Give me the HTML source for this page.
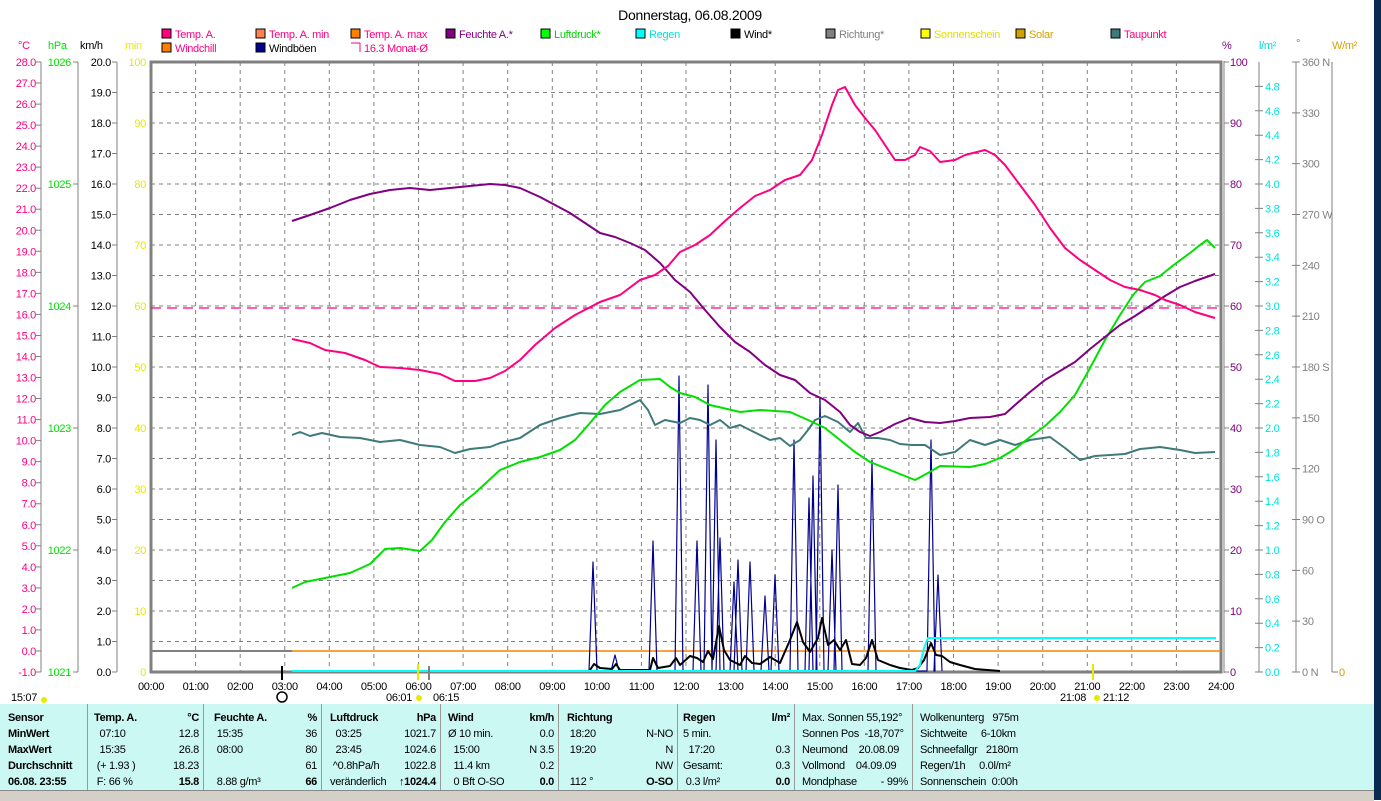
<!DOCTYPE html>
<html><head><meta charset="utf-8">
<style>
html,body{margin:0;padding:0;background:#fff;}
body{width:1381px;height:800px;overflow:hidden;position:relative;font-family:"Liberation Sans",sans-serif;}
svg{position:absolute;left:0;top:0;}
text{font-family:"Liberation Sans",sans-serif;font-size:11px;letter-spacing:-0.3px;}
.tb{position:absolute;left:0;top:704px;width:1374px;height:86px;background:#ccf8f4;}
.col{position:absolute;top:0;height:86px;border-right:1px solid #999;font-size:11px;line-height:16px;padding-top:6px;box-sizing:border-box;letter-spacing:-0.3px;}
.col div{white-space:nowrap;height:16px;position:relative;}
.r{position:absolute;right:4px;}
b{font-weight:bold;}
.foot{position:absolute;left:0;top:790px;width:1374px;height:10px;background:#d4d0c8;border-top:1px solid #888;}
.blue{position:absolute;left:1374px;top:0;width:7px;height:800px;background:#0a2a50;}
</style></head><body>
<svg id="s" width="1381" height="704" xmlns="http://www.w3.org/2000/svg">
<text x="690" y="20" text-anchor="middle" style="font-size:14px">Donnerstag, 06.08.2009</text>
<g id="legend"></g>
<g id="grid"></g>
<g id="axes"></g>
<g fill="none" stroke-linejoin="round">
<line x1="151" y1="308" x2="1221" y2="308" stroke="#ff0080" stroke-width="1.3" stroke-dasharray="10,6"/>
<line x1="151" y1="651" x2="292" y2="651" stroke="#808080" stroke-width="2"/>
<line x1="292" y1="651" x2="1221" y2="651" stroke="#ff8000" stroke-width="1.5"/>
<polyline stroke="#000090" stroke-width="1.2" id="gust" points=""/>
<polyline stroke="#000" stroke-width="2" points="590,670 594,664 600,668 612,669 616,664 620,670 640,670 650,670 653,658 658,668 670,666 676,658 680,665 690,656 697,658 703,662 708,651 713,659 719,626 724,650 730,660 740,665 745,656 752,663 760,664 770,657 780,663 790,640 797,622 803,642 810,652 818,638 822,618 828,645 834,640 840,650 846,640 852,664 860,665 866,658 872,640 878,660 890,665 900,668 912,670 918,668 924,660 931,643 936,655 942,656 950,662 960,665 975,669 1000,671"/>
<polyline stroke="#3f7a7a" stroke-width="2" points="292,435 300,432 310,436 322,433 340,437 360,438 380,442 400,440 420,445 440,447 455,453 470,449 490,447 500,443 520,438 540,425 560,418 580,413 600,414 620,410 640,400 648,410 655,425 665,420 680,423 690,418 700,420 710,425 720,420 730,428 740,425 760,435 770,440 780,438 790,446 800,440 808,430 815,420 825,416 838,422 850,432 858,423 866,438 878,438 890,440 900,444 912,445 925,445 940,455 955,452 970,440 985,445 1000,440 1015,445 1030,440 1050,437 1065,448 1080,460 1095,456 1110,455 1125,454 1140,449 1160,447 1180,450 1195,453 1215,452"/>
<polyline stroke="#00e000" stroke-width="2" points="292,588 305,582 330,577 350,573 370,564 385,549 400,548 420,551 432,540 445,522 460,505 475,493 500,470 520,462 540,457 560,450 575,440 590,423 605,405 620,392 640,380 660,379 670,387 680,393 695,397 710,405 740,412 760,410 790,412 808,420 825,428 840,440 855,452 870,462 890,470 915,480 928,473 940,466 970,467 985,464 1000,458 1015,449 1030,437 1045,426 1060,412 1075,395 1090,368 1105,340 1120,315 1133,295 1145,282 1160,276 1175,264 1190,253 1200,245 1207,240 1215,248"/>
<polyline stroke="#800080" stroke-width="2" points="292,221 310,215 330,208 350,200 370,194 390,190 410,188 430,190 450,188 470,186 490,184 505,185 520,188 540,197 555,205 570,213 585,223 600,233 615,237 630,243 645,250 660,263 675,280 690,292 705,310 720,327 735,342 750,352 765,365 780,375 795,380 810,393 825,400 840,412 850,425 860,432 870,436 880,432 895,424 910,418 925,422 940,423 955,421 970,418 990,417 1005,414 1015,405 1030,392 1045,380 1060,371 1075,362 1090,349 1105,337 1120,325 1135,316 1150,306 1165,296 1180,287 1195,281 1215,274"/>
<polyline stroke="#ff0080" stroke-width="2" points="292,339 310,343 325,350 345,353 365,360 380,367 400,368 420,370 440,374 455,381 475,381 490,378 505,371 520,360 535,345 555,328 575,315 600,302 620,295 640,280 655,275 668,266 680,252 695,245 710,235 725,221 740,208 755,196 770,190 785,180 800,175 812,160 822,135 832,105 838,90 845,87 855,105 865,118 875,130 885,145 895,160 905,160 915,155 920,147 930,151 940,162 955,160 965,155 985,150 995,155 1005,165 1020,185 1035,205 1050,228 1065,248 1080,260 1095,270 1110,280 1125,287 1140,290 1155,295 1165,300 1180,305 1195,312 1215,318"/>
<polyline stroke="#00ffff" stroke-width="2" points="292,671 915,671 920,665 924,648 928,638 1216,638"/>
</g>
<g id="ticks"></g>
</svg>
<div class="tb">
<div class="col" style="left:0;width:88px;padding-left:8px"><div><b>Sensor</b></div><div><b>MinWert</b></div><div><b>MaxWert</b></div><div><b>Durchschnitt</b></div><div><b>06.08. 23:55</b></div></div>
<div class="col" style="left:88px;width:116px;padding-left:6px"><div><b>Temp. A.</b><b class="r">°C</b></div><div>&nbsp;&nbsp;07:10<span class="r">12.8</span></div><div>&nbsp;&nbsp;15:35<span class="r">26.8</span></div><div>&nbsp;(+ 1.93 )<span class="r">18.23</span></div><div>&nbsp;F: 66 %<b class="r">15.8</b></div></div>
<div class="col" style="left:204px;width:118px;padding-left:10px"><div><b>Feuchte A.</b><b class="r">%</b></div><div>&nbsp;15:35<span class="r">36</span></div><div>&nbsp;08:00<span class="r">80</span></div><div><span class="r">61</span></div><div>&nbsp;8.88 g/m³<b class="r">66</b></div></div>
<div class="col" style="left:322px;width:119px;padding-left:8px"><div><b>Luftdruck</b><b class="r">hPa</b></div><div>&nbsp;&nbsp;03:25<span class="r">1021.7</span></div><div>&nbsp;&nbsp;23:45<span class="r">1024.6</span></div><div>&nbsp;^0.8hPa/h<span class="r">1022.8</span></div><div>veränderlich<b class="r">↑1024.4</b></div></div>
<div class="col" style="left:441px;width:118px;padding-left:7px"><div><b>Wind</b><b class="r">km/h</b></div><div>Ø 10 min.<span class="r">0.0</span></div><div>&nbsp;&nbsp;15:00<span class="r">N 3.5</span></div><div>&nbsp;&nbsp;11.4 km<span class="r">0.2</span></div><div>&nbsp;&nbsp;0 Bft O-SO<b class="r">0.0</b></div></div>
<div class="col" style="left:559px;width:119px;padding-left:8px"><div><b>Richtung</b></div><div>&nbsp;18:20<span class="r">N-NO</span></div><div>&nbsp;19:20<span class="r">N</span></div><div><span class="r">NW</span></div><div>&nbsp;112 °<b class="r">O-SO</b></div></div>
<div class="col" style="left:678px;width:117px;padding-left:5px"><div><b>Regen</b><b class="r">l/m²</b></div><div>5 min.</div><div>&nbsp;&nbsp;17:20<span class="r">0.3</span></div><div>Gesamt:<span class="r">0.3</span></div><div>&nbsp;0.3 l/m²<b class="r">0.0</b></div></div>
<div class="col" style="left:795px;width:118px;padding-left:7px"><div>Max. Sonnen 55,192°</div><div>Sonnen Pos&nbsp; -18,707°</div><div>Neumond&nbsp;&nbsp;&nbsp; 20.08.09</div><div>Vollmond&nbsp;&nbsp;&nbsp; 04.09.09</div><div>Mondphase<span class="r">- 99%</span></div></div>
<div class="col" style="left:913px;width:200px;padding-left:7px;border:none"><div>Wolkenunterg&nbsp;&nbsp; 975m</div><div>Sichtweite&nbsp;&nbsp;&nbsp;&nbsp; 6-10km</div><div>Schneefallgr&nbsp;&nbsp; 2180m</div><div>Regen/1h&nbsp;&nbsp;&nbsp;&nbsp; 0.0l/m²</div><div>Sonnenschein&nbsp; 0:00h</div></div>
</div>
<div class="foot"></div>
<div class="blue"></div>
<script>
var NS="http://www.w3.org/2000/svg";
function el(p,t,a,txt){var e=document.createElementNS(NS,t);for(var k in a)e.setAttribute(k,a[k]);if(txt!==undefined)e.textContent=txt;document.getElementById(p).appendChild(e);return e;}
var L=[["Temp. A.","#ff0080","#ff0080",162,38],["Temp. A. min","#ff8050","#ff0080",256,38],["Temp. A. max","#ff8000","#ff0080",351,38],["Feuchte A.*","#800080","#800080",446,38],["Luftdruck*","#00ff00","#00d000",541,38],["Regen","#00ffff","#00e0e0",636,38],["Wind*","#000000","#000",731,38],["Richtung*","#808080","#808080",826,38],["Sonnenschein","#ffff00","#e0e000",921,38],["Solar","#d4a000","#d4a000",1016,38],["Taupunkt","#3f7a7a","#ff0080",1111,38],["Windchill","#ff8000","#ff0080",162,52],["Windböen","#000090","#000",256,52]];
L.forEach(function(l){el("legend","rect",{x:l[3],y:l[4]-9,width:9,height:9,fill:l[1],stroke:"#000"});el("legend","text",{x:l[3]+13,y:l[4],fill:l[2]},l[0]);});
el("legend","path",{d:"M360 43V52M351 43H360",stroke:"#ff0080",fill:"none"});
el("legend","text",{x:364,y:52,fill:"#ff0080"},"16.3 Monat-Ø");
var d="";for(var h=1;h<24;h++){var x=151+h*1070/24;d+="M"+x.toFixed(1)+" 62V672";}
for(var k=1;k<20;k++){var y=62+k*30.5;d+="M151 "+y+"H1221";}
el("grid","path",{d:d,stroke:"#808080","stroke-dasharray":"4,4",fill:"none"});
el("grid","rect",{x:151,y:62,width:1070,height:610,fill:"none",stroke:"#808080","stroke-width":3});
el("grid","line",{x1:1224,y1:61,x2:1224,y2:673,stroke:"#808080","stroke-width":1});
for(var h=0;h<=24;h++){var x=151+h*1070/24;el("axes","text",{x:x,y:690,"text-anchor":"middle"},(h<10?"0":"")+h+":00");}
function axis(xl,xt,col,vals,y0,step,anchor){var dd="M"+xt+" "+y0+"V672";vals.forEach(function(v,i){var y=y0+i*step;dd+="M"+(xt-5)+" "+y+"H"+xt;el("axes","text",{x:xl,y:y+4,fill:col,"text-anchor":anchor},v);});return dd;}
var g="";
var c=[];for(var v=28;v>=-1;v--)c.push(v.toFixed(1));
g+=axis(36,41,"#ff0080",c,62,610/29,"end");
g+=axis(71,78,"#00e000",["1026","1025","1024","1023","1022","1021"],62,122,"end");
var km=[];for(var v=20;v>=0;v--)km.push(v.toFixed(1));
g+=axis(111,117,"#000",km,62,30.5,"end");
var mn=[];for(var v=100;v>=0;v-=10)mn.push(v);
mn.forEach(function(v,i){el("axes","text",{x:146,y:62+i*61+4,fill:"#e8e800","text-anchor":"end"},v);});
el("axes","path",{d:g,stroke:"#808080",fill:"none"});
el("axes","text",{x:18,y:49,fill:"#ff0080"},"°C");
el("axes","text",{x:48,y:49,fill:"#00e000"},"hPa");
el("axes","text",{x:80,y:49,fill:"#000"},"km/h");
el("axes","text",{x:125,y:49,fill:"#e8e800"},"min");
var rg="";
mn.forEach(function(v,i){var y=62+i*61;rg+="M1224 "+y+"H1229";el("axes","text",{x:1230,y:y+4,fill:"#800080"},v);});
rg+="M1259 62V672";for(var i=1;i<=25;i++){var y=62+i*24.4;var v=(5-i*0.2);rg+="M1255 "+y+"H1263";el("axes","text",{x:1265,y:y+4,fill:"#00e0e0"},v.toFixed(1));}
var dirs={360:"N",270:"W",180:"S",90:"O",0:"N"};
rg+="M1296 62V672";for(var i=0;i<=12;i++){var y=62+i*610/12;var v=360-30*i;rg+="M1292 "+y+"H1300";el("axes","text",{x:1302,y:y+4,fill:"#808080"},v+(dirs[v]?" "+dirs[v]:""));}
rg+="M1332 62V672M1332 672H1338";el("axes","text",{x:1339,y:676,fill:"#d4a000"},"0");
el("axes","path",{d:rg,stroke:"#808080",fill:"none"});
el("axes","text",{x:1222,y:49,fill:"#800080"},"%");
el("axes","text",{x:1259,y:49,fill:"#00e0e0"},"l/m²");
el("axes","text",{x:1296,y:47,fill:"#808080"},"°");
el("axes","text",{x:1332,y:49,fill:"#d4a000"},"W/m²");
var sp=[[593,562],[615,655],[653,541],[679,376],[697,541],[708,385],[716,440],[720,538],[734,582],[738,560],[750,562],[765,596],[775,575],[794,440],[809,498],[813,476],[820,398],[832,550],[838,485],[872,460],[931,440],[938,575]];
var pts="590,671 ";sp.forEach(function(s){pts+=(s[0]-4)+",671 "+(s[0]-2)+","+((s[1]+671)/2)+" "+s[0]+","+s[1]+" "+(s[0]+2)+","+((s[1]+671)/2)+" "+(s[0]+4)+",671 ";});
document.getElementById("gust").setAttribute("points",pts);
el("ticks","line",{x1:282,y1:666,x2:282,y2:680,stroke:"#000","stroke-width":2});
el("ticks","circle",{cx:282,cy:697,r:5,fill:"none",stroke:"#000","stroke-width":1.5});
el("ticks","line",{x1:418,y1:664,x2:418,y2:680,stroke:"#e8e800","stroke-width":2});
el("ticks","line",{x1:429,y1:666,x2:429,y2:680,stroke:"#808080","stroke-width":2});
el("ticks","line",{x1:1093,y1:664,x2:1093,y2:680,stroke:"#e8e800","stroke-width":2});
el("ticks","text",{x:11,y:701},"15:07");
el("ticks","circle",{cx:44,cy:700,r:3,fill:"#e8e800"});
el("ticks","text",{x:386,y:701},"06:01");
el("ticks","circle",{cx:419,cy:698,r:3,fill:"#e8e800"});
el("ticks","text",{x:433,y:701},"06:15");
el("ticks","text",{x:1060,y:701},"21:08");
el("ticks","text",{x:1103,y:701},"21:12");
el("ticks","circle",{cx:1097,cy:698,r:3,fill:"#e8e800"});
</script>
</body></html>
